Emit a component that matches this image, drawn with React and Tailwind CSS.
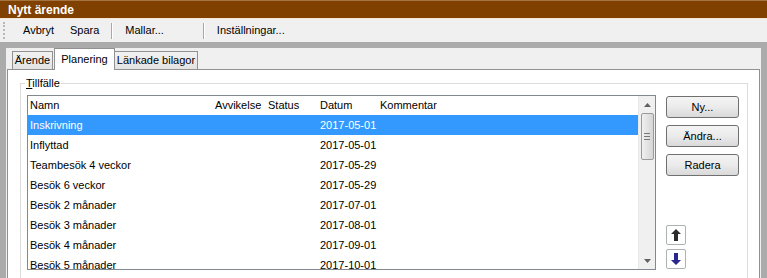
import React from 'react';

const rows = [
  { name: 'Inskrivning', date: '2017-05-01', selected: true },
  { name: 'Inflyttad', date: '2017-05-01' },
  { name: 'Teambesök 4 veckor', date: '2017-05-29' },
  { name: 'Besök 6 veckor', date: '2017-05-29' },
  { name: 'Besök 2 månader', date: '2017-07-01' },
  { name: 'Besök 3 månader', date: '2017-08-01' },
  { name: 'Besök 4 månader', date: '2017-09-01' },
  { name: 'Besök 5 månader', date: '2017-10-01' },
];

const cols = 'grid grid-cols-[185px_54px_51px_60px_1fr] whitespace-nowrap';

function Sep() {
  return <span className="block w-px h-[16px] bg-[#a8a8a8] border-r border-white box-content" />;
}

function Button({ children }) {
  return (
    <button className="w-[73px] h-[22px] rounded-[3px] border border-[#707070] bg-gradient-to-b from-[#f4f4f4] via-[#ebebeb] to-[#d9d9d9] text-[11px] text-black flex items-center justify-center">
      {children}
    </button>
  );
}

function ArrowButton({ up }) {
  return (
    <button className="w-[20px] h-[20px] rounded-[2px] border border-[#adb2b5] bg-white flex items-center justify-center">
      <svg width="10" height="12" viewBox="0 0 10 12">
        {up ? (
          <path d="M5 0 L10 5 L7 5 L7 12 L3 12 L3 5 L0 5 Z" fill="#2b2b2b" />
        ) : (
          <path d="M5 12 L10 7 L7 7 L7 0 L3 0 L3 7 L0 7 Z" fill="#27278f" />
        )}
      </svg>
    </button>
  );
}

export default function App() {
  return (
    <div
      className="w-[767px] h-[278px] overflow-hidden flex flex-col bg-[#f0f0f0] text-[11px] text-black"
      style={{ fontFamily: '"Liberation Sans", Arial, sans-serif' }}
    >
      {/* Title bar */}
      <div className="h-[19px] shrink-0 bg-[#7f4000] border-t border-[#a4733f] border-b border-b-[#f6e6d2] flex items-center pl-[8px] text-white font-bold text-[12px]">
        Nytt ärende
      </div>

      {/* Toolbar */}
      <div className="h-[23px] shrink-0 bg-[#f0f0f0] flex items-center relative whitespace-nowrap">
        <span className="absolute left-[3px] top-[3px] h-[17px] border-l-2 border-dotted border-[#b8b8b8]" />
        <span className="ml-[23px]">Avbryt</span>
        <span className="ml-[16px]">Spara</span>
        <span className="ml-[12px]"><Sep /></span>
        <span className="ml-[12px]">Mallar...</span>
        <span className="ml-[39px]"><Sep /></span>
        <span className="ml-[12px]">Inställningar...</span>
      </div>

      {/* Gray frame */}
      <div className="flex-1 bg-[#ababab] pt-[6px] pl-[6px] pr-[6px] flex flex-col min-h-0">
        <div className="flex-1 bg-[#f0f0f0] flex flex-col min-h-0">
          {/* Tabs */}
          <div className="h-[21px] shrink-0 flex items-end pl-[6px] relative z-10 whitespace-nowrap">
            <div className="w-[41px] h-[18px] border border-b-0 border-[#919191] bg-gradient-to-b from-[#f2f2f2] to-[#e3e3e3] flex items-center justify-center">
              Ärende
            </div>
            <div className="w-[61px] h-[22px] -mb-px ml-[1px] border border-b-0 border-[#919191] bg-white flex items-center justify-center">
              Planering
            </div>
            <div className="w-[83px] h-[18px] border border-b-0 border-l-0 border-[#919191] bg-gradient-to-b from-[#f2f2f2] to-[#e3e3e3] flex items-center justify-center">
              Länkade bilagor
            </div>
          </div>

          {/* Tab page */}
          <div className="flex-1 bg-white border border-[#919191] border-b-0 mx-[1px] pl-[12px] pr-[11px] pt-[13px] min-h-0">
            {/* Group box */}
            <div className="relative border border-[#dcdcdc] border-b-0 h-full pl-[6px] pr-[8px] pt-[11px] flex gap-[10px]">
              <span className="absolute left-[4px] -top-[8px] bg-white px-[1px] leading-[14px]">
                <span className="underline">T</span>illfälle
              </span>

              {/* List */}
              <div className="w-[630px] h-[175px] border border-[#828790] bg-white relative overflow-hidden flex">
                <div className="flex-1 flex flex-col">
                  <div className={`${cols} h-[19px] items-center shrink-0`}>
                    <span className="pl-[2px]">Namn</span>
                    <span className="pl-[2px]">Avvikelse</span>
                    <span className="pl-[1px]">Status</span>
                    <span className="pl-[2px]">Datum</span>
                    <span className="pl-[2px]">Kommentar</span>
                  </div>
                  {rows.map((r) => (
                    <div
                      key={r.name}
                      className={`${cols} h-[20px] items-center shrink-0 ${r.selected ? 'bg-[#3399ff] text-white' : ''}`}
                    >
                      <span className="pl-[2px]">{r.name}</span>
                      <span />
                      <span />
                      <span className="pl-[2px]">{r.date}</span>
                      <span />
                    </div>
                  ))}
                </div>

                {/* Scrollbar */}
                <div className="w-[17px] shrink-0 bg-[#f0f0f0] flex flex-col items-center border-l border-[#e8e8e8]">
                  <div className="h-[17px] w-full flex items-center justify-center">
                    <svg width="7" height="4" viewBox="0 0 7 4"><path d="M3.5 0 L7 4 L0 4 Z" fill="#606060" /></svg>
                  </div>
                  <div className="w-[13px] h-[47px] rounded-[2px] border border-[#9a9a9a] bg-gradient-to-r from-[#f0f0f0] to-[#d6d6d6] flex flex-col items-center justify-center gap-[2px]">
                    <span className="w-[6px] h-px bg-[#777]" />
                    <span className="w-[6px] h-px bg-[#777]" />
                    <span className="w-[6px] h-px bg-[#777]" />
                  </div>
                  <div className="flex-1" />
                  <div className="h-[17px] w-full flex items-center justify-center">
                    <svg width="7" height="4" viewBox="0 0 7 4"><path d="M0 0 L7 0 L3.5 4 Z" fill="#606060" /></svg>
                  </div>
                </div>
              </div>

              {/* Buttons */}
              <div className="flex flex-col pt-[1px] h-[175px]">
                <div className="flex flex-col gap-[7px]">
                  <Button>Ny...</Button>
                  <Button>Ändra...</Button>
                  <Button>Radera</Button>
                </div>
                <div className="flex-1" />
                <div className="flex flex-col gap-[4px] pb-[1px]">
                  <ArrowButton up />
                  <ArrowButton />
                </div>
              </div>
            </div>
          </div>
        </div>
      </div>
    </div>
  );
}
